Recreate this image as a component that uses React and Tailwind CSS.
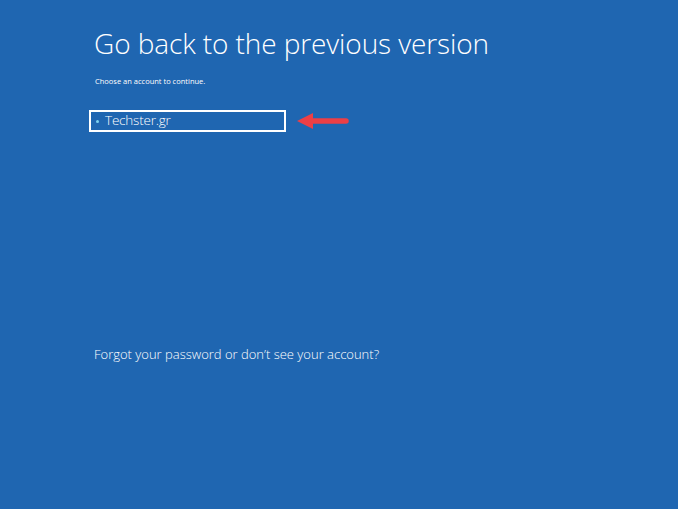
import React from 'react';

const Arrow = () => (
    <svg width="54" height="20" viewBox="0 0 54 20" className="block">
        <path d="M1 10 L17 2 L17 18 Z" fill="#ec3f46" />
        <line x1="14" y1="10" x2="50" y2="10" stroke="#ec3f46" strokeWidth="5.5" strokeLinecap="round" />
    </svg>
);

const App = () => {
    return (
        <div className="w-[678px] h-[509px] bg-[#1f66b1] text-white overflow-hidden" style={{ fontFamily: '"Open Sans", "Noto Sans", sans-serif' }}>
            <div className="pl-[94px] pt-[23px]">
                {/* Title */}
                <h1 className="text-[28px] font-light leading-[40px] tracking-[-0.1px]">Go back to the previous version</h1>
                <p className="mt-[13px] text-[7.5px] leading-[10px] pl-[1px]">Choose an account to continue.</p>

                {/* Account row */}
                <div className="mt-[24px] ml-[-5px] flex items-center gap-[10px]">
                    <button className="w-[197px] h-[22px] border-2 border-white flex items-center pl-[5px] gap-[6px] text-left">
                        <span className="w-[3px] h-[3px] rounded-full bg-[#7fd3f0]"></span>
                        <span className="text-[13.5px] font-light leading-none tracking-[-0.2px]">Techster.gr</span>
                    </button>
                    <Arrow />
                </div>

                {/* Footer link */}
                <p className="mt-[213px] text-[13px] font-light leading-[18px]">Forgot your password or don’t see your account?</p>
            </div>
        </div>
    );
};

export default App;
